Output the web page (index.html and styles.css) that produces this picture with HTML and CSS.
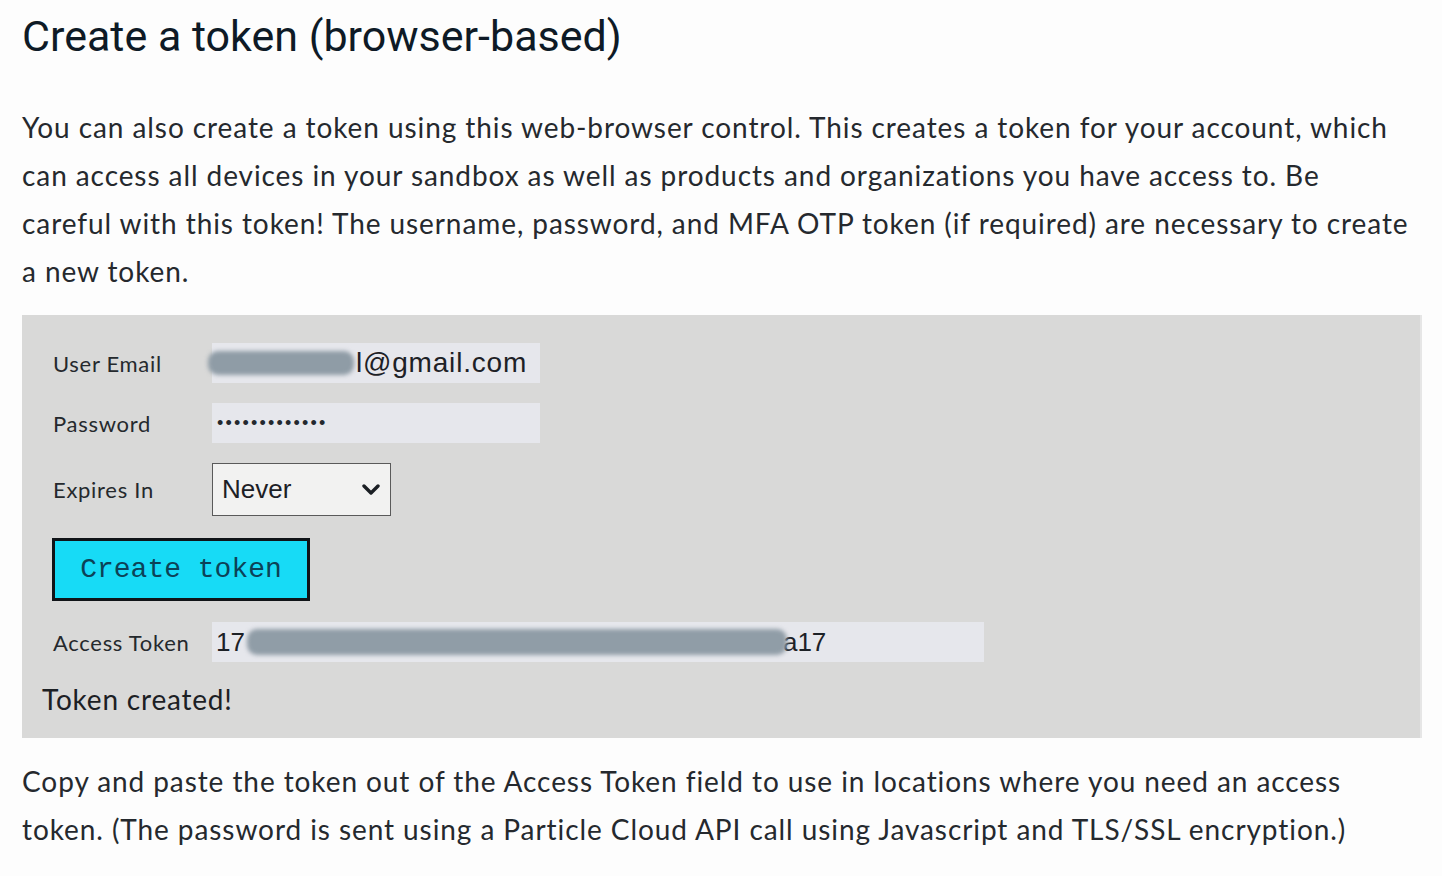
FILE: index.html
```html
<!DOCTYPE html>
<html lang="en">
<head>
<meta charset="utf-8">
<title>Create a token (browser-based)</title>
<link rel="stylesheet" href="styles.css">
</head>
<body>
<main class="page">
  <h1 class="title">Create a token (browser-based)</h1>
  <p class="text intro">You can also create a token using this web-browser control. This creates a token for your account, which can access all devices in your sandbox as well as products and organizations you have access to. Be careful with this token! The username, password, and MFA OTP token (if required) are necessary to create a new token.</p>

  <section class="panel">
    <div class="form">
      <label class="label">User Email</label>
      <div class="field field-email"><span class="smudge smudge-email"></span><span class="value">l@gmail.com</span></div>

      <label class="label">Password</label>
      <div class="field field-pass"><span class="dots">•••••••••••••</span></div>

      <label class="label">Expires In</label>
      <div class="select">
        <span class="select-value">Never</span>
        <svg class="chev" width="18" height="12" viewBox="0 0 18 12"><polyline points="2,2 9,9 16,2" fill="none" stroke="#1b1f24" stroke-width="3.4" stroke-linecap="round" stroke-linejoin="round"/></svg>
      </div>

      <button class="btn" type="button">Create token</button>

      <label class="label">Access Token</label>
      <div class="field field-token"><span class="value">17</span><span class="smudge smudge-token"></span><span class="value">a17</span></div>
    </div>
    <p class="status">Token created!</p>
  </section>

  <p class="text outro">Copy and paste the token out of the Access Token field to use in locations where you need an access token. (The password is sent using a Particle Cloud API call using Javascript and TLS/SSL encryption.)</p>
</main>
</body>
</html>
```

FILE: styles.css
```css
* { box-sizing: border-box; }
html, body { margin: 0; padding: 0; background: #fdfdfd; }
body { font-family: "Lato", "Liberation Sans", sans-serif; color: #222; }

.page {
  width: 1442px;
  padding: 0 21px 0 22px;
}

.title {
  margin: 0;
  padding-top: 10px;
  font-family: "Roboto", "Liberation Sans", sans-serif;
  font-weight: 400;
  font-size: 43px;
  line-height: 52px;
  color: #0e1a26;
}

.text {
  margin: 0;
  font-size: 28px;
  letter-spacing: 0.92px;
  line-height: 48px;
  color: #25292e;
}
.intro { margin-top: 41px; max-width: 1390px; }

.panel {
  margin-top: 20px;
  width: 1400px;
  background: #d9d9d8;
  padding: 28px 0 19px 0;
  border-right: 2px solid #e6e6e6;
}

.form {
  display: grid;
  grid-template-columns: 159px auto;
  justify-content: start;
  align-items: center;
  row-gap: 20px;
  padding-left: 31px;
}

.label {
  font-size: 22px;
  letter-spacing: 0.7px;
  color: #25292d;
}

.field {
  height: 40px;
  background: #e6e7ec;
  display: flex;
  align-items: center;
  font-family: "Liberation Sans", Arial, sans-serif;
  font-size: 28px;
  letter-spacing: 0.8px;
  color: #1d2126;
  position: relative;
}
.field-email { width: 328px; padding-left: 0; }
.field-pass { width: 328px; padding-left: 5px; }
.field-token { width: 772px; padding-left: 4px; font-size: 26px; letter-spacing: 0; }

.smudge {
  display: inline-block;
  height: 24px;
  background: #8f9ca6;
  border-radius: 10px;
  filter: blur(2px);
}
.smudge-email { width: 146px; margin-left: -4px; margin-right: 2px; }
.smudge-token { width: 540px; height: 26px; margin: 0 -4px 0 2px; background: #909da7; }

.dots {
  font-size: 18px;
  letter-spacing: 2.2px;
  color: #23282e;
  line-height: 1;
}

.select {
  width: 179px;
  height: 53px;
  border: 1px solid #5a5a5a;
  background: #f2f2f1;
  display: flex;
  align-items: center;
  justify-content: space-between;
  padding: 0 10px 0 9px;
  font-family: "Liberation Sans", Arial, sans-serif;
  font-size: 26px;
  color: #1c2025;
}
.chev { display: block; }

.btn {
  grid-column: 1 / span 2;
  justify-self: start;
  width: 258px;
  height: 63px;
  margin: 2px 0 1px -1px;
  background: #17dbf6;
  border: 3px solid #101418;
  font-family: "Liberation Mono", "DejaVu Sans Mono", monospace;
  font-size: 28px;
  color: #0c4257;
  padding: 0;
}

.status {
  margin: 17px 0 0 20px;
  font-size: 28px;
  letter-spacing: 0.8px;
  line-height: 40px;
  color: #1c2024;
}

.outro { margin-top: 19px; }
```
